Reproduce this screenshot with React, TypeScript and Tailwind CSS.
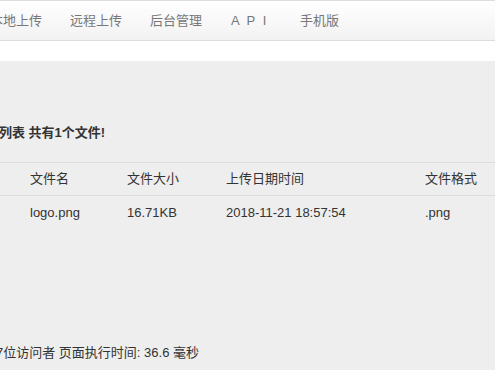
import React from "react";

const navItems = ["本地上传", "远程上传", "后台管理", "A P I", "手机版"];

const columns = [
  { label: "文件名", value: "logo.png", w: "w-[97px]" },
  { label: "文件大小", value: "16.71KB", w: "w-[99px]" },
  { label: "上传日期时间", value: "2018-11-21 18:57:54", w: "w-[199px]" },
  { label: "文件格式", value: ".png", w: "w-[70px]" },
];

export default function App() {
  return (
    <div
      className="w-[495px] h-[370px] overflow-hidden bg-[#eeeeee] text-[#333] text-[13px]"
      style={{ fontFamily: '"Liberation Sans", "Noto Sans CJK SC", sans-serif' }}
    >
      {/* navbar */}
      <div className="h-[41px] border-t border-b border-[#dddddd] bg-gradient-to-b from-white to-[#f2f2f2] shadow-[0_1px_1px_rgba(0,0,0,0.05)]">
        <ul className="flex items-center h-full -ml-[10px] text-[#777]">
          {navItems.map((item, i) => (
            <li
              key={item}
              className={i === 3 ? "w-[69px] tracking-[2px] ml-[1px]" : "mr-[28px]"}
            >
              {item}
            </li>
          ))}
        </ul>
      </div>

      <div className="h-[20px] bg-white" />

      {/* file list */}
      <div className="pt-[63px]">
        <h3 className="font-bold text-[13px] -ml-[1px] leading-[18px]">列表 共有1个文件!</h3>

        <table className="mt-[20px] w-full border-collapse">
          <tbody>
            <tr className="border-t border-b border-[#dddddd]">
              <td className="w-[30px] h-[33px]" />
              {columns.map((c) => (
                <td key={c.label} className={`${c.w} h-[33px] align-middle`}>
                  {c.label}
                </td>
              ))}
            </tr>
            <tr>
              <td className="h-[34px]" />
              {columns.map((c) => (
                <td key={c.label} className="h-[34px] align-middle">
                  {c.value}
                </td>
              ))}
            </tr>
          </tbody>
        </table>

        <p className="mt-[113px] -ml-[4px] text-[13px]">7位访问者 页面执行时间: 36.6 毫秒</p>
      </div>
    </div>
  );
}
